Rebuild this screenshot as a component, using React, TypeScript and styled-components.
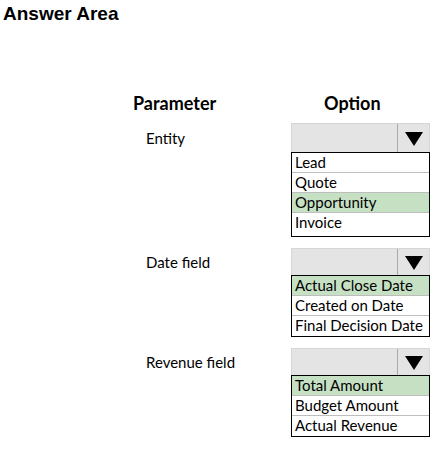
import styled, { createGlobalStyle } from 'styled-components';

const GlobalStyle = createGlobalStyle`
  body {
    margin: 0;
    background: #fff;
    font-family: Lato, "Open Sans", sans-serif;
    color: #000;
  }
`;

const Page = styled.div`
  width: 442px;
  height: 449px;
  position: relative;
  overflow: hidden;
`;

const Title = styled.h1`
  margin: 0;
  padding: 3px 0 0 3px;
  font-family: "Liberation Sans", Arial, sans-serif;
  font-size: 19px;
  line-height: 22px;
  font-weight: bold;
`;

const Grid = styled.div`
  display: grid;
  grid-template-columns: 158px 139px;
  margin: 68px 0 0 133px;
  row-gap: 11px;
`;

const Heading = styled.div<{ $indent?: number }>`
  font-size: 18px;
  font-weight: bold;
  line-height: 20px;
  padding-left: ${p => p.$indent ?? 0}px;
  margin-bottom: -1px;
`;

const Label = styled.div<{ $h: number }>`
  height: ${p => p.$h}px;
  display: flex;
  align-items: center;
  padding-left: 13px;
  font-size: 15px;
`;

const Dropdown = styled.div`
  display: flex;
  flex-direction: column;
`;

const Box = styled.div<{ $h: number }>`
  height: ${p => p.$h}px;
  display: flex;
  background: #e4e4e4;
  border: 1px solid #d6d6d6;
  border-bottom: none;
  box-sizing: border-box;
`;

const BoxField = styled.div`
  flex: 1;
  border-right: 1px solid #a8a8a8;
`;

const Arrow = styled.div`
  width: 31px;
  display: flex;
  align-items: center;
  justify-content: center;
  padding-top: 2px;
  box-sizing: border-box;
`;

const List = styled.div<{ $tail?: number }>`
  border: 1px solid #000;
  padding-bottom: ${p => p.$tail ?? 0}px;
`;

const Item = styled.div<{ $selected?: boolean }>`
  height: 20px;
  box-sizing: border-box;
  line-height: 19px;
  padding-left: 3px;
  font-size: 15px;
  background: ${p => (p.$selected ? '#c6e0c4' : '#fff')};
  border-bottom: 1px solid #bdbdbd;
  white-space: nowrap;

  &:last-child {
    border-bottom: none;
  }
`;

const sections = [
  {
    label: 'Entity',
    items: ['Lead', 'Quote', 'Opportunity', 'Invoice'],
    selected: 2,
    tail: 3,
    box: 29,
  },
  {
    label: 'Date field',
    items: ['Actual Close Date', 'Created on Date', 'Final Decision Date'],
    selected: 0,
    tail: 0,
    box: 27,
  },
  {
    label: 'Revenue field',
    items: ['Total Amount', 'Budget Amount', 'Actual Revenue'],
    selected: 0,
    tail: 0,
    box: 27,
  },
];

const Triangle = () => (
  <svg width="18" height="14" viewBox="0 0 18 14">
    <polygon points="0,0 18,0 9,14" fill="#000" />
  </svg>
);

export default function App() {
  return (
    <Page>
      <GlobalStyle />
      <Title>Answer Area</Title>
      <Grid>
        <Heading>Parameter</Heading>
        <Heading $indent={33}>Option</Heading>
        {sections.map(s => (
          <>
            <Label key={s.label + '-l'} $h={s.box}>
              {s.label}
            </Label>
            <Dropdown key={s.label + '-d'}>
              <Box $h={s.box}>
                <BoxField />
                <Arrow>
                  <Triangle />
                </Arrow>
              </Box>
              <List $tail={s.tail}>
                {s.items.map((it, i) => (
                  <Item key={it} $selected={i === s.selected}>
                    {it}
                  </Item>
                ))}
              </List>
            </Dropdown>
          </>
        ))}
      </Grid>
    </Page>
  );
}
